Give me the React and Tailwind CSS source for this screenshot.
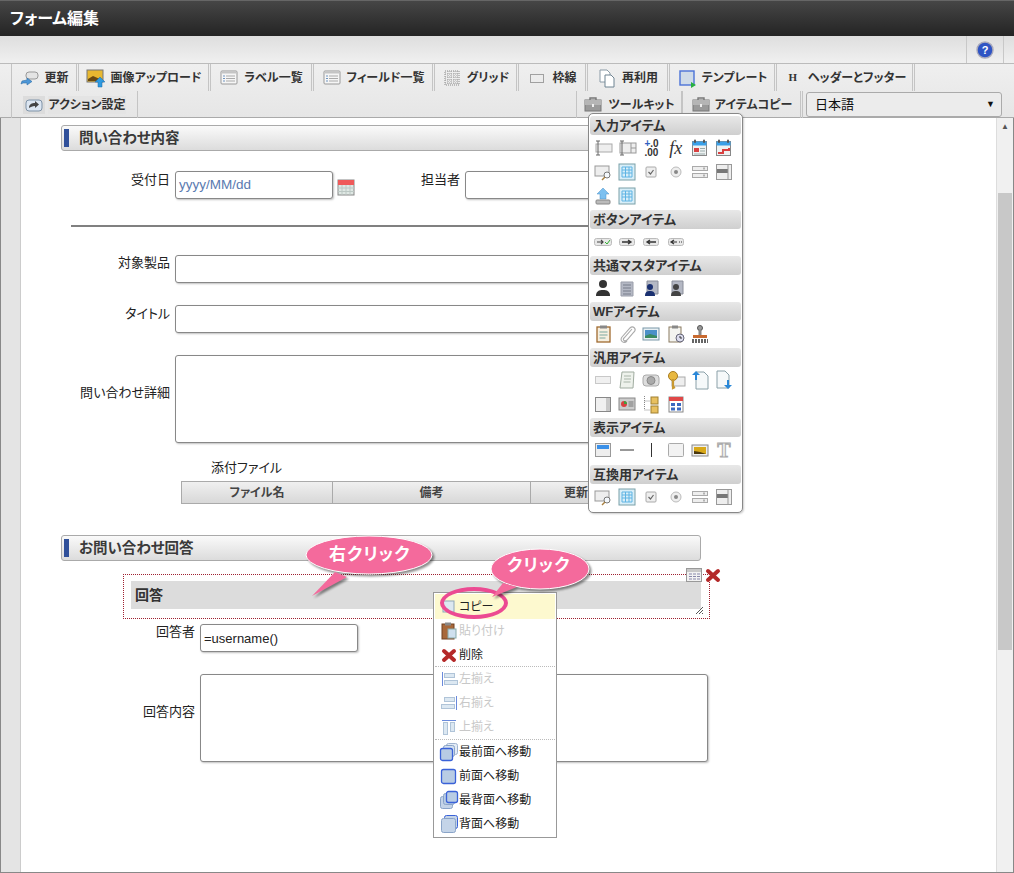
const S = ({ children, w = 20, h = 20, className = "" }) => (
  <svg width={w} height={h} viewBox={`0 0 ${w} ${h}`} className={`shrink-0 ${className}`}>
    {children}
  </svg>
);

const rings = (
  <>
    <rect x="4" y="1.500" width="2" height="3.500" rx="1" fill="#555" />
    <rect x="13" y="1.500" width="2" height="3.500" rx="1" fill="#555" />
  </>
);

const icons = {
  update: (
    <S>
      <rect x="7" y="4" width="12" height="7" rx="3" fill="#e4e4e4" stroke="#999" />
      <path d="M2 16l1-3 5-1v-2l5 3.500-5 3.500v-2l-4 0z" fill="#4d97d8" stroke="#2f6fa8" strokeWidth=".6" />
    </S>
  ),
  image: (
    <S>
      <rect x="1" y="2" width="16" height="12" fill="#e8b830" stroke="#777" />
      <path d="M2 11l5-3 9 4v1H2z" fill="#6b4a12" />
      <path d="M12 19v-5h-3l5-5 5 5h-3v5z" fill="#2f9ae0" stroke="#1b6aa8" strokeWidth=".5" />
    </S>
  ),
  list: (
    <S>
      <rect x="2" y="3" width="16" height="13" rx="1" fill="#f6f6f6" stroke="#999" />
      <rect x="2.500" y="3.500" width="15" height="2" fill="#c4c4c4" />
      <path d="M7 8h9M7 10.500h9M7 13h9" stroke="#aaa" />
      <path d="M4 8h2M4 10.500h2M4 13h2" stroke="#6f94c0" />
    </S>
  ),
  grid: (
    <S>
      <rect x="3" y="3" width="14" height="14" fill="none" stroke="#8a8a8a" strokeDasharray="1 1" />
      <path d="M6 3v14M9 3v14M12 3v14M15 3v14M3 6h14M3 9h14M3 12h14M3 15h14" stroke="#a0a0a0" strokeDasharray="1 1" />
    </S>
  ),
  frame: (
    <S>
      <rect x="3.500" y="6.500" width="13" height="8" fill="none" stroke="#555" strokeDasharray="1 1" />
    </S>
  ),
  reuse: (
    <S>
      <path d="M3 2h7l3 3v9H3z" fill="#fff" stroke="#8a9aa6" />
      <path d="M8 7h6l3 3v9H8z" fill="#fff" stroke="#6f8492" />
    </S>
  ),
  template: (
    <S>
      <rect x="3" y="3" width="14" height="14" fill="#cfdbe8" stroke="#4a72d8" strokeWidth="1.400" />
      <path d="M14 14l5 3-5 3z" fill="#28b040" />
    </S>
  ),
  action: (
    <S>
      <rect x="2" y="5" width="16" height="11" rx="3" fill="#dce6f2" stroke="#7f93a8" />
      <path d="M5 13c0-4 3-5 6-5V6l4 3.500-4 3.500v-2c-3 0-4 1-6 2z" fill="#444" />
    </S>
  ),
  toolbox: (
    <S>
      <path d="M7 5V3h6v2" fill="none" stroke="#777" strokeWidth="1.400" />
      <rect x="2" y="5" width="16" height="11" fill="#9a9a9a" stroke="#777" />
      <rect x="2" y="5" width="16" height="5" fill="#b5b5b5" />
      <rect x="9" y="9" width="2" height="3" fill="#eee" />
    </S>
  ),
  help: (
    <svg width="18" height="18" viewBox="0 0 18 18">
      <circle cx="9" cy="9" r="8" fill="#2f54c4" stroke="#aab" strokeWidth="1.400" />
      <text x="9" y="13" textAnchor="middle" fontSize="11" fontWeight="700" fill="#fff" fontFamily="Liberation Sans">?</text>
    </svg>
  ),
  calendar: (
    <S>
      <rect x="2" y="3" width="16" height="15" fill="#dfe8e4" stroke="#888" />
      <rect x="2" y="3" width="16" height="5" fill="#ef5a5a" />
      <path d="M2 11h16M2 14.500h16M6 8v10M10 8v10M14 8v10" stroke="#bcc8c4" />
    </S>
  ),
  text: (
    <S>
      <rect x="3" y="6" width="16" height="8" fill="#eee" stroke="#aaa" />
      <path d="M3 3h4M5 3v14M3 17h4" stroke="#666" fill="none" />
    </S>
  ),
  textnum: (
    <S>
      <rect x="3" y="5" width="16" height="10" fill="#eee" stroke="#999" />
      <path d="M14 5v10M14 10h5" stroke="#999" />
      <path d="M3 3h4M5 3v14M3 17h4" stroke="#666" fill="none" />
    </S>
  ),
  decimal: (
    <span className="flex flex-col items-center text-[10px] leading-[9px] font-bold text-[#333] font-['Liberation_Sans',sans-serif]">
      <span><span className="text-[#3060c0]">+</span>.0</span>
      <span>.00</span>
    </span>
  ),
  fx: <span className="text-[18px] leading-none italic text-[#333] font-['Liberation_Serif',serif]">fx</span>,
  date: (
    <S>
      <rect x="2.500" y="3.500" width="14" height="14" fill="#eef2f2" stroke="#888" />
      <rect x="2.500" y="3.500" width="14" height="4" fill="#3aa0e8" />
      {rings}
      <rect x="4" y="10" width="5" height="4" fill="#d84040" />
      <path d="M10 10.500h5M10 13h5M4 16h11" stroke="#9aa" />
    </S>
  ),
  daterange: (
    <S>
      <rect x="2.500" y="3.500" width="14" height="14" fill="#eef2f2" stroke="#888" />
      <rect x="2.500" y="3.500" width="14" height="4" fill="#3aa0e8" />
      {rings}
      <path d="M4 15h5v-3h6v-2" fill="none" stroke="#d84040" strokeWidth="2" />
    </S>
  ),
  search: (
    <S>
      <rect x="2" y="4" width="14" height="10" fill="#eee" stroke="#999" />
      <circle cx="14" cy="13" r="3" fill="#f4f8fc" stroke="#777" />
      <path d="M12 15l-3 3" stroke="#a88040" strokeWidth="1.500" />
    </S>
  ),
  table: (
    <S>
      <rect x="2" y="2" width="16" height="16" fill="#d8eef8" stroke="#7aa0a8" />
      <path d="M5 5h10v10H5zM5 8h10M5 11h10M8.500 5v10M12 5v10" fill="none" stroke="#5fb4e4" />
    </S>
  ),
  check: (
    <S>
      <rect x="5" y="5" width="10" height="10" rx="1" fill="#eee" stroke="#aaa" />
      <path d="M7.500 10l2 2 3-4" fill="none" stroke="#666" strokeWidth="1.200" />
    </S>
  ),
  radio: (
    <S>
      <circle cx="10" cy="10" r="5" fill="#eee" stroke="#bbb" />
      <circle cx="10" cy="10" r="2" fill="#888" />
    </S>
  ),
  select: (
    <S>
      <rect x="2.500" y="4.500" width="15" height="4" fill="#eee" stroke="#aaa" />
      <rect x="2.500" y="11.500" width="15" height="4" fill="#eee" stroke="#aaa" />
      <path d="M14 5.500v2M14 12.500v2" stroke="#777" />
    </S>
  ),
  listbox: (
    <S>
      <rect x="2.500" y="2.500" width="15" height="15" fill="#eee" stroke="#999" />
      <rect x="3" y="7" width="11" height="4" fill="#777" />
      <path d="M14 3v14" stroke="#999" />
    </S>
  ),
  upload: (
    <S>
      <path d="M10 2l6 6h-3v5H7V8H4z" fill="#7cc0f0" stroke="#4a90c8" strokeWidth=".5" />
      <rect x="3" y="14" width="14" height="4" rx="1" fill="#bbb" stroke="#888" />
    </S>
  ),
  btnok: (
    <S>
      <rect x="1.500" y="6.500" width="17" height="7" rx="2" fill="#e8e8e8" stroke="#bbb" />
      <path d="M4 10h6M8 8l2 2-2 2" stroke="#444" fill="none" strokeWidth="1.200" />
      <path d="M12 10l2 2 3-4" stroke="#30b030" fill="none" />
    </S>
  ),
  btnnext: (
    <S>
      <rect x="2.500" y="6.500" width="15" height="7" rx="2" fill="#e8e8e8" stroke="#bbb" />
      <path d="M5 10h9M11 8l3 2-3 2" stroke="#333" fill="none" strokeWidth="1.300" />
    </S>
  ),
  btnback: (
    <S>
      <rect x="2.500" y="6.500" width="15" height="7" rx="2" fill="#e8e8e8" stroke="#bbb" />
      <path d="M15 10H6M9 8l-3 2 3 2" stroke="#333" fill="none" strokeWidth="1.300" />
    </S>
  ),
  btndel: (
    <S>
      <rect x="2.500" y="6.500" width="15" height="7" rx="2" fill="#e8e8e8" stroke="#bbb" />
      <path d="M11 10H5M8 8l-3 2 3 2M13 10h1M15 10h1" stroke="#333" fill="none" strokeWidth="1.200" />
    </S>
  ),
  user: (
    <S>
      <circle cx="10" cy="6" r="4" fill="#333" />
      <path d="M3 18c0-5 3-6 7-6s7 1 7 6z" fill="#333" />
    </S>
  ),
  building: (
    <S>
      <path d="M4 18V4h12v14z" fill="#b4b8c4" stroke="#9a9eaa" />
      <path d="M6 7h8M6 10h8M6 13h8M6 16h8" stroke="#777c8a" />
    </S>
  ),
  orguser: (
    <S>
      <path d="M6 16V3h11v13z" fill="#b4b8c4" stroke="#8a8e9a" />
      <circle cx="9" cy="9" r="3" fill="#1a3070" />
      <path d="M4 18c0-4 2-5 5-5s5 1 5 5z" fill="#1a3070" />
    </S>
  ),
  orggray: (
    <S>
      <path d="M6 16V3h11v13z" fill="#b4b8c4" stroke="#8a8e9a" />
      <circle cx="10" cy="9" r="3" fill="#444" />
      <path d="M5 18c0-4 2-5 5-5s5 1 5 5z" fill="#444" />
    </S>
  ),
  clipboard: (
    <S>
      <rect x="4" y="3" width="13" height="15" fill="#f6efe0" stroke="#a06a30" strokeWidth="1.300" />
      <rect x="7" y="1.500" width="7" height="3" fill="#888" />
      <path d="M6.500 8h8M6.500 11h8M6.500 14h6" stroke="#7aa8a0" />
    </S>
  ),
  clip: (
    <S>
      <path d="M15 5l-8 9c-2 2 1 4 3 2l7-8c3-3-1-7-4-4l-8 9c-3 4 2 7 5 4" fill="none" stroke="#aaa" strokeWidth="1.100" />
    </S>
  ),
  picture: (
    <S>
      <rect x="2" y="4" width="16" height="12" fill="#e8f0f4" stroke="#7a97a8" />
      <rect x="4" y="6" width="12" height="8" fill="#4a90c8" />
      <path d="M4 12l5-2 7 2v2H4z" fill="#3a8a60" />
    </S>
  ),
  clipclock: (
    <S>
      <rect x="3" y="3" width="12" height="15" fill="#f4f4f0" stroke="#8a7a60" />
      <rect x="6" y="1.500" width="6" height="3" fill="#888" />
      <circle cx="14" cy="14" r="4" fill="#dde" stroke="#667" />
      <path d="M14 12v2h2" stroke="#333" fill="none" />
    </S>
  ),
  stamp: (
    <S>
      <circle cx="10" cy="4" r="2.500" fill="#999" stroke="#555" />
      <rect x="8.500" y="6" width="3" height="5" fill="#888" />
      <rect x="3" y="11" width="14" height="3" fill="#c86a30" />
      <path d="M2 16h16M2 18h16" stroke="#333" strokeWidth="1.500" strokeDasharray="2 1" />
    </S>
  ),
  dashed: (
    <S>
      <rect x="2.500" y="6.500" width="15" height="7" fill="#f0f0f0" stroke="#999" strokeDasharray="1 1" />
    </S>
  ),
  scroll: (
    <S>
      <path d="M5 2h12l-1 16H3z" fill="#eef2ec" stroke="#a0aca0" />
      <path d="M7 6h7M7 9h7M6.500 12h7" stroke="#a8b4a8" />
    </S>
  ),
  capture: (
    <S>
      <rect x="2" y="5" width="16" height="11" rx="3" fill="#ddd" stroke="#aaa" />
      <circle cx="10" cy="10.500" r="4" fill="#aaa" stroke="#888" />
    </S>
  ),
  key: (
    <S>
      <rect x="6" y="7" width="13" height="9" fill="#eee" stroke="#aaa" />
      <circle cx="7" cy="6" r="4.500" fill="#e8b840" stroke="#a87c20" />
      <path d="M7 9v9l2-1" fill="none" stroke="#c89830" strokeWidth="2.200" />
    </S>
  ),
  fileup: (
    <S>
      <path d="M6 2h8l4 4v13H6z" fill="#f6f9fa" stroke="#8aa0a8" />
      <path d="M5 10V5H2l4-4 4 4H7v5z" fill="#2a88d8" />
    </S>
  ),
  filedown: (
    <S>
      <path d="M3 1h8l4 4v13H3z" fill="#f6f9fa" stroke="#8aa0a8" />
      <path d="M13 10v5h-3l4 4 4-4h-3v-5z" fill="#2a88d8" />
    </S>
  ),
  panel: (
    <S>
      <rect x="2.500" y="3.500" width="15" height="14" fill="#f0f0f0" stroke="#888" />
      <rect x="13" y="4" width="4" height="13" fill="#c8c8c8" />
    </S>
  ),
  chart: (
    <S>
      <rect x="2" y="4" width="16" height="12" fill="#ccc" stroke="#888" />
      <circle cx="7" cy="10" r="3" fill="#d84040" />
      <path d="M7 10V7a3 3 0 0 1 3 3z" fill="#40a040" />
      <path d="M11.500 8h5M11.500 10h5M11.500 12h5" stroke="#777" />
    </S>
  ),
  tree: (
    <S>
      <path d="M3.500 2v14h6M3.500 7h6" fill="none" stroke="#888" strokeDasharray="1 1" />
      <rect x="10" y="3" width="7" height="7" fill="#e8c060" stroke="#a08030" />
      <rect x="10" y="12" width="7" height="7" fill="#e8c060" stroke="#a08030" />
    </S>
  ),
  sched: (
    <S>
      <rect x="3" y="3" width="14" height="15" fill="#fff" stroke="#888" />
      <rect x="3" y="3" width="14" height="4" fill="#e04848" />
      <path d="M5 9h4v3H5zM11 9h4v3h-4zM5 13.500h4v3H5zM11 13.500h4v3h-4z" fill="#3a68c0" />
    </S>
  ),
  header: (
    <S>
      <rect x="2.500" y="3.500" width="15" height="13" fill="#eee" stroke="#999" />
      <rect x="4" y="5" width="12" height="4" fill="#3a90e8" />
    </S>
  ),
  hline: (
    <S>
      <path d="M3 10h14" stroke="#333" />
    </S>
  ),
  vline: (
    <S>
      <path d="M10.500 3v14" stroke="#333" />
    </S>
  ),
  box: (
    <S>
      <rect x="2.500" y="3.500" width="15" height="13" rx="1" fill="#f2f2f2" stroke="#aaa" />
    </S>
  ),
  photo: (
    <S>
      <rect x="2" y="5" width="16" height="11" fill="#eee" stroke="#888" />
      <rect x="4" y="7" width="12" height="7" fill="#d8a818" />
      <path d="M4 11l6 1 6 2H4z" fill="#4a3810" />
    </S>
  ),
  tee: <span className="text-[20px] leading-none font-bold text-[#eee] [-webkit-text-stroke:1px_#aaa] font-['Liberation_Serif',serif]">T</span>,
  copy: (
    <S w={14} h={14}>
      <rect x="1" y="1" width="11" height="11" fill="#dce8f0" stroke="#90a8b8" />
    </S>
  ),
  paste: (
    <S>
      <rect x="3" y="3" width="12" height="15" fill="#a8683a" stroke="#704020" />
      <rect x="6" y="1.500" width="6" height="3" fill="#888" />
      <rect x="9" y="8" width="8" height="9" fill="#cfe0ee" stroke="#8aa" />
    </S>
  ),
  del: (
    <S w={16} h={16}>
      <path d="M3 4l10 9M13 4L3 13" stroke="#b42828" strokeWidth="4" strokeLinecap="round" />
    </S>
  ),
  alignL: (
    <S>
      <path d="M3.500 3v14" stroke="#6a8adc" />
      <rect x="5.500" y="4.500" width="10" height="4" fill="#dce8f2" stroke="#b0c4d8" />
      <rect x="5.500" y="11.500" width="13" height="4" fill="#dce8f2" stroke="#b0c4d8" />
    </S>
  ),
  alignR: (
    <S>
      <path d="M17.500 3v14" stroke="#6a8adc" />
      <rect x="5.500" y="4.500" width="10" height="4" fill="#dce8f2" stroke="#b0c4d8" />
      <rect x="2.500" y="11.500" width="13" height="4" fill="#dce8f2" stroke="#b0c4d8" />
    </S>
  ),
  alignT: (
    <S>
      <path d="M3 3.500h14" stroke="#6a8adc" />
      <rect x="4.500" y="5.500" width="4" height="12" fill="#dce8f2" stroke="#b0c4d8" />
      <rect x="11.500" y="5.500" width="4" height="9" fill="#dce8f2" stroke="#b0c4d8" />
    </S>
  ),
  front: (
    <S>
      <rect x="7.500" y="1.500" width="11" height="11" rx="2" fill="#e4ecf6" stroke="#a0b4d0" />
      <rect x="4.500" y="3.500" width="11" height="11" rx="2" fill="#d4e0f0" stroke="#8aa4c8" />
      <rect x="1.500" y="6.500" width="12" height="12" rx="2" fill="#b8cce4" stroke="#3a62d8" strokeWidth="1.300" />
    </S>
  ),
  forward: (
    <S>
      <rect x="2.500" y="3.500" width="14" height="14" rx="2" fill="#b8cce4" stroke="#3a62d8" strokeWidth="1.300" />
    </S>
  ),
  back: (
    <S>
      <rect x="1.500" y="6.500" width="12" height="12" rx="2" fill="#c4d4e8" stroke="#8aa4c8" />
      <rect x="4.500" y="3.500" width="11" height="11" rx="2" fill="#b8cce4" stroke="#8aa4c8" />
      <rect x="7.500" y="1.500" width="11" height="11" rx="2" fill="#b8cce4" stroke="#3a62d8" strokeWidth="1.300" />
    </S>
  ),
  backward: (
    <S>
      <rect x="5.500" y="1.500" width="13" height="13" rx="2" fill="#c4d4e8" stroke="#3a62d8" />
      <rect x="2.500" y="4.500" width="14" height="14" rx="2" fill="#c4d4e8" stroke="#8aa4c8" />
    </S>
  ),
};

const topTabs = [
  { label: "更新", icon: "update", w: "w-[67px]" },
  { label: "画像アップロード", icon: "image", w: "w-[132px]" },
  { label: "ラベル一覧", icon: "list", w: "w-[103px]" },
  { label: "フィールド一覧", icon: "list", w: "w-[121px]" },
  { label: "グリッド", icon: "grid", w: "w-[84px]" },
  { label: "枠線", icon: "frame", w: "w-[69px]" },
  { label: "再利用", icon: "reuse", w: "w-[82px]" },
  { label: "テンプレート", icon: "template", w: "w-[107px]" },
  { label: "ヘッダーとフッター", icon: "h", w: "w-[138px]" },
];

const palette = [
  { title: "入力アイテム", icons: ["text", "textnum", "decimal", "fx", "date", "daterange", "search", "table", "check", "radio", "select", "listbox", "upload", "table"] },
  { title: "ボタンアイテム", icons: ["btnok", "btnnext", "btnback", "btndel"] },
  { title: "共通マスタアイテム", icons: ["user", "building", "orguser", "orggray"] },
  { title: "WFアイテム", icons: ["clipboard", "clip", "picture", "clipclock", "stamp"] },
  { title: "汎用アイテム", icons: ["dashed", "scroll", "capture", "key", "fileup", "filedown", "panel", "chart", "tree", "sched"] },
  { title: "表示アイテム", icons: ["header", "hline", "vline", "box", "photo", "tee"], tall: true },
  { title: "互換用アイテム", icons: ["search", "table", "check", "radio", "select", "listbox"] },
];

const menu = [
  { label: "コピー", icon: "copy", h: "h-[25px]", active: true },
  { label: "貼り付け", icon: "paste", h: "h-[24px]", off: true },
  { label: "削除", icon: "del", h: "h-[23px]", line: true },
  { label: "左揃え", icon: "alignL", h: "h-[24px]", off: true },
  { label: "右揃え", icon: "alignR", h: "h-[24px]", off: true },
  { label: "上揃え", icon: "alignT", h: "h-[24px]", off: true, line: true },
  { label: "最前面へ移動", icon: "front", h: "h-[24px]" },
  { label: "前面へ移動", icon: "forward", h: "h-[24px]" },
  { label: "最背面へ移動", icon: "back", h: "h-[24px]" },
  { label: "背面へ移動", icon: "backward", h: "h-[24px]" },
];

function Tab({ t }) {
  return (
    <div className={`${t.w} h-full flex items-center justify-center gap-[5px] border-r-[3px] border-double border-[#c4c4c4] text-[12px] font-bold text-[#333]`}>
      {t.icon === "h" ? (
        <span className="w-5 text-center text-[11px] font-bold font-['Liberation_Serif',serif]">H</span>
      ) : (
        icons[t.icon]
      )}
      <span className="whitespace-nowrap">{t.label}</span>
    </div>
  );
}

function Section({ top, title }) {
  return (
    <div style={{ top }} className="absolute left-[40px] w-[640px] h-[26px] rounded-[3px] border border-[#aaa] bg-linear-to-b from-[#fafafa] to-[#dcdcdc] flex items-center">
      <span className="ml-[2px] w-[5px] h-[18px] bg-[#30509a]" />
      <span className="ml-[10px] text-[14.500px] font-bold text-[#3a3a3a] leading-none">{title}</span>
    </div>
  );
}

function Label({ right, top, children }) {
  return (
    <span style={{ left: right - 100, top }} className="absolute w-[100px] text-right text-[13px] leading-[18px] text-[#222] whitespace-nowrap">
      {children}
    </span>
  );
}

function Field({ left, top, w, h, children }) {
  return (
    <div style={{ left, top, width: w, height: h }} className="absolute rounded-[3px] border border-[#888] bg-white shadow-[1px_1px_2px_rgba(0,0,0,0.25)] px-[3px] flex items-center text-[13px] leading-none">
      {children}
    </div>
  );
}

function Callout({ cls, tail, text, w, h, textCls }) {
  return (
    <div className={`absolute ${cls}`} style={{ width: w, height: h }}>
      <svg width={w} height={h} className="absolute left-0 top-0 overflow-visible drop-shadow-[2px_2px_1px_rgba(0,0,0,0.45)]">
        <ellipse cx={tail.cx} cy={tail.cy} rx={tail.rx} ry={tail.ry} fill="#f46a9c" stroke="#fff" strokeWidth="1" />
        <path d={tail.d} fill="#f46a9c" />
      </svg>
      <span className={`absolute text-white font-bold text-[17px] tracking-[1px] leading-none whitespace-nowrap ${textCls}`}>{text}</span>
    </div>
  );
}

export default function App() {
  return (
    <div className="relative w-[1014px] h-[873px] overflow-hidden bg-white flex flex-col [font-feature-settings:'palt'] font-['Liberation_Sans','Noto_Sans_CJK_JP',sans-serif]">
      <div className="h-[36px] shrink-0 bg-linear-to-b from-[#464646] to-[#242424] flex items-center pl-[10px] border-t border-[#666]">
        <span className="text-white text-[16px] font-bold leading-none">フォーム編集</span>
      </div>

      <div className="h-[28px] shrink-0 bg-linear-to-b from-[#dedede] to-[#f0f0f0] border-b border-[#bbb] flex justify-end">
        <div className="w-[38px] mr-[10px] border-x border-[#c8c8c8] flex items-center justify-center">{icons.help}</div>
      </div>

      <div className="h-[54px] shrink-0 bg-linear-to-b from-[#efefef] to-[#e6e6e6] border-b border-[#aaa] flex flex-col pl-[11px]">
        <div className="h-[27px] shrink-0 flex">
          <div className="border-l border-[#c4c4c4]" />
          {topTabs.map((t) => (
            <Tab key={t.label} t={t} />
          ))}
        </div>
        <div className="h-[27px] shrink-0 flex items-center">
          <div className="w-[127px] h-full flex items-center justify-center gap-[3px] border-x border-[#c4c4c4] text-[12px] font-bold text-[#333]">
            <span className="w-[22px] h-[18px] flex items-center justify-center bg-[#dcdcdc]">{icons.action}</span>
            <span className="bg-[#e4e4e4] whitespace-nowrap">アクション設定</span>
          </div>
          <div className="flex-1" />
          <div className="w-[107px] h-full flex items-center justify-center gap-[5px] border-l border-r-2 border-[#c4c4c4] text-[12px] font-bold text-[#333]">
            {icons.toolbox}
            <span>ツールキット</span>
          </div>
          <div className="w-[120px] h-full flex items-center justify-center gap-[4px] border-r-[3px] border-double border-[#c4c4c4] text-[12px] font-bold text-[#333]">
            {icons.toolbox}
            <span className="whitespace-nowrap">アイテムコピー</span>
          </div>
          <div className="ml-[3px] mr-[12px] w-[196px] h-[25px] rounded-[3px] border border-[#aaa] bg-[#ececec] flex items-center justify-between pl-[8px] pr-[6px] text-[13px] text-[#111]">
            <span>日本語</span>
            <span className="text-[9px]">▼</span>
          </div>
        </div>
      </div>

      <div className="flex-1 flex min-h-0 border-x border-b border-[#888]">
        <div className="w-[20px] shrink-0 bg-[#e4e4e4] border-r border-[#ccc]" />
        <div className="relative flex-1">
          <Section top={7} title="問い合わせ内容" />
          <Label right={149} top={53}>受付日</Label>
          <Field left={154} top={53} w={158} h={28}>
            <span className="text-[#5a7ab0] text-[13.500px]">yyyy/MM/dd</span>
          </Field>
          <div className="absolute left-[315px] top-[59px]">{icons.calendar}</div>
          <Label right={439} top={53}>担当者</Label>
          <Field left={444} top={53} w={160} h={28} />
          <div className="absolute left-[50px] top-[107px] w-[560px] h-[2px] bg-[#808080]" />

          <Label right={149} top={136}>対象製品</Label>
          <Field left={154} top={137} w={450} h={28} />
          <Label right={149} top={187}>タイトル</Label>
          <Field left={154} top={187} w={450} h={28} />
          <Label right={149} top={266}>問い合わせ詳細</Label>
          <Field left={154} top={237} w={450} h={88} />

          <span className="absolute left-[190px] top-[341px] text-[13px] leading-[18px] text-[#222]">添付ファイル</span>
          <div className="absolute left-[160px] top-[363px] h-[23px] flex border border-[#aaa] bg-linear-to-b from-[#f0f0f0] to-[#d8d8d8] text-[12px] font-bold text-[#444]">
            <div className="w-[151px] border-r border-[#aaa] flex items-center justify-center">ファイル名</div>
            <div className="w-[198px] border-r border-[#aaa] flex items-center justify-center">備考</div>
            <div className="w-[60px] flex items-center pl-[33px] whitespace-nowrap">更新</div>
          </div>

          <Section top={417} title="お問い合わせ回答" />

          <div className="absolute left-[102px] top-[456px] w-[587px] h-[45px] border border-dotted border-[#a02030]">
            <div className="absolute left-[7px] top-[6px] w-[570px] h-[28px] bg-[#dcdcdc] flex items-center pl-[4px] text-[14px] font-bold text-[#333]">回答</div>
            <div className="absolute right-[6px] bottom-[4px] w-[8px] h-[8px] bg-[repeating-linear-gradient(135deg,#555_0_1px,transparent_1px_2px)] [clip-path:polygon(100%_0,100%_100%,0_100%)]" />
            <div className="absolute left-[562px] -top-[7px]">
              <svg width="16" height="14" viewBox="0 0 16 14">
                <rect x=".5" y=".5" width="15" height="13" fill="#f2f2f2" stroke="#999" />
                <rect x="1" y="1" width="14" height="3" fill="#c8c8c8" />
                <path d="M3 6h3M7 6h3M11 6h3M3 8.500h3M7 8.500h3M11 8.500h3M3 11h3M7 11h3M11 11h3" stroke="#88a" />
              </svg>
            </div>
            <div className="absolute left-[581px] -top-[8px]">{icons.del}</div>
          </div>

          <Label right={174} top={505}>回答者</Label>
          <Field left={179} top={506} w={158} h={28}>
            <span className="text-[#222] text-[13px]">=username()</span>
          </Field>
          <Label right={174} top={585}>回答内容</Label>
          <Field left={179} top={556} w={508} h={88} />
        </div>
        <div className="w-[17px] shrink-0 bg-[#f0f0f0] border-l border-[#ddd] flex flex-col items-center">
          <span className="h-[75px] pt-[5px] text-[8px] leading-none text-[#555]">▲</span>
          <div className="w-[14px] h-[457px] bg-[#c8c8c8]" />
        </div>
      </div>

      <div className="absolute left-[588px] top-[113px] w-[155px] h-[400px] rounded-[5px] border border-[#888] bg-white px-[1px] pt-[2px] shadow-[1px_1px_2px_rgba(0,0,0,0.2)]">
        {palette.map((p) => (
          <div key={p.title}>
            <div className="h-[19px] rounded-[3px] bg-linear-to-b from-[#e8e8e8] to-[#cfcfcf] flex items-center pl-[3px] text-[13px] font-bold text-[#333] leading-none whitespace-nowrap">
              {p.title}
            </div>
            <div className={`grid grid-cols-[repeat(6,24.2px)] auto-rows-[24px] pl-[1px] pt-[1px] ${p.tall ? "pb-[3px]" : "pb-[2px]"}`}>
              {p.icons.map((name, i) => (
                <div key={i} className="flex items-center justify-center">{icons[name]}</div>
              ))}
            </div>
          </div>
        ))}
      </div>

      <div className="absolute left-[433px] top-[592px] w-[124px] h-[246px] border border-[#999] bg-white pt-[1px] px-[1px]">
        {menu.map((m) => (
          <div key={m.label}>
            <div className={`${m.h} flex items-center text-[12px] ${m.active ? "bg-[#fdf9cf]" : ""} ${m.off ? "text-[#c8c8c8]" : "text-[#222]"}`}>
              <span className="w-[24px] pl-[3px] flex justify-center">{icons[m.icon]}</span>
              <span className="whitespace-nowrap">{m.label}</span>
            </div>
            {m.line && <div className="border-b border-dotted border-[#bbb]" />}
          </div>
        ))}
      </div>

      <div className="absolute left-[440px] top-[587px] w-[68px] h-[32px] rounded-[50%] border-[4px] border-[#ec4a92]" />
      <Callout
        cls="left-[305px] top-[536px]"
        w={128}
        h={60}
        tail={{ cx: 64, cy: 19, rx: 63, ry: 19, d: "M30 36L7 60 42 41z" }}
        text="右クリック"
        textCls="left-[24px] top-[10px]"
      />
      <Callout
        cls="left-[491px] top-[549px]"
        w={99}
        h={48}
        tail={{ cx: 49, cy: 20, rx: 49, ry: 20, d: "M12 34L1 48 26 38z" }}
        text="クリック"
        textCls="left-[16px] top-[8px]"
      />
    </div>
  );
}
